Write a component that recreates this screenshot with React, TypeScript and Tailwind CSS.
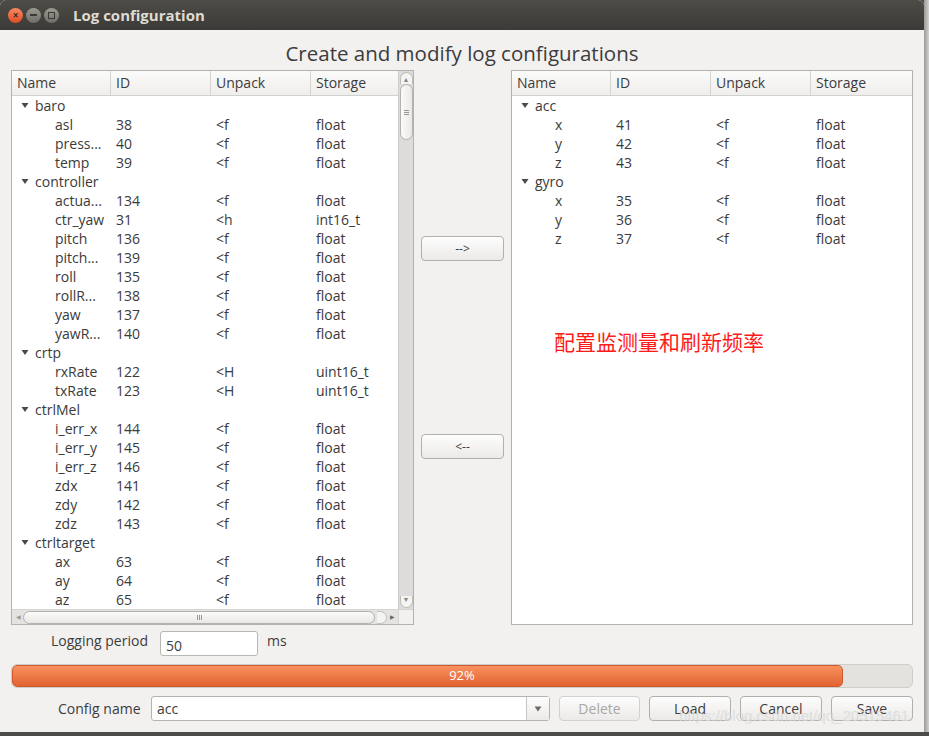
import React from 'react'

type Row = { name: string; id?: string; unpack?: string; storage?: string; parent?: boolean }

const leftRows: Row[] = [
  { name: 'baro', parent: true },
  { name: 'asl', id: '38', unpack: '<f', storage: 'float' },
  { name: 'press...', id: '40', unpack: '<f', storage: 'float' },
  { name: 'temp', id: '39', unpack: '<f', storage: 'float' },
  { name: 'controller', parent: true },
  { name: 'actua...', id: '134', unpack: '<f', storage: 'float' },
  { name: 'ctr_yaw', id: '31', unpack: '<h', storage: 'int16_t' },
  { name: 'pitch', id: '136', unpack: '<f', storage: 'float' },
  { name: 'pitch...', id: '139', unpack: '<f', storage: 'float' },
  { name: 'roll', id: '135', unpack: '<f', storage: 'float' },
  { name: 'rollR...', id: '138', unpack: '<f', storage: 'float' },
  { name: 'yaw', id: '137', unpack: '<f', storage: 'float' },
  { name: 'yawR...', id: '140', unpack: '<f', storage: 'float' },
  { name: 'crtp', parent: true },
  { name: 'rxRate', id: '122', unpack: '<H', storage: 'uint16_t' },
  { name: 'txRate', id: '123', unpack: '<H', storage: 'uint16_t' },
  { name: 'ctrlMel', parent: true },
  { name: 'i_err_x', id: '144', unpack: '<f', storage: 'float' },
  { name: 'i_err_y', id: '145', unpack: '<f', storage: 'float' },
  { name: 'i_err_z', id: '146', unpack: '<f', storage: 'float' },
  { name: 'zdx', id: '141', unpack: '<f', storage: 'float' },
  { name: 'zdy', id: '142', unpack: '<f', storage: 'float' },
  { name: 'zdz', id: '143', unpack: '<f', storage: 'float' },
  { name: 'ctrltarget', parent: true },
  { name: 'ax', id: '63', unpack: '<f', storage: 'float' },
  { name: 'ay', id: '64', unpack: '<f', storage: 'float' },
  { name: 'az', id: '65', unpack: '<f', storage: 'float' },
]

const rightRows: Row[] = [
  { name: 'acc', parent: true },
  { name: 'x', id: '41', unpack: '<f', storage: 'float' },
  { name: 'y', id: '42', unpack: '<f', storage: 'float' },
  { name: 'z', id: '43', unpack: '<f', storage: 'float' },
  { name: 'gyro', parent: true },
  { name: 'x', id: '35', unpack: '<f', storage: 'float' },
  { name: 'y', id: '36', unpack: '<f', storage: 'float' },
  { name: 'z', id: '37', unpack: '<f', storage: 'float' },
]

function Caret() {
  return (
    <svg width="8" height="7" viewBox="0 0 8 7" className="shrink-0">
      <path d="M0.5 1 L7.5 1 L4 6 Z" fill="#4a4a48" />
    </svg>
  )
}

function Header() {
  return (
    <div className="flex h-[25px] border-b border-[#d3d1cd] bg-gradient-to-b from-[#fbfbfa] to-[#efeeec] text-[#3c3c3c]">
      <div className="w-[99px] border-r border-[#d6d4d0] pl-[5px] leading-[24px]">Name</div>
      <div className="w-[100px] border-r border-[#d6d4d0] pl-[5px] leading-[24px]">ID</div>
      <div className="w-[100px] border-r border-[#d6d4d0] pl-[5px] leading-[24px]">Unpack</div>
      <div className="flex-1 pl-[5px] leading-[24px]">Storage</div>
    </div>
  )
}

function Rows({ rows }: { rows: Row[] }) {
  return (
    <div className="flex flex-col bg-white text-[#3a3a3a]">
      {rows.map((r, i) =>
        r.parent ? (
          <div key={i} className="flex h-[19px] items-center pl-[9px]">
            <Caret />
            <span className="ml-[6px] leading-[19px]">{r.name}</span>
          </div>
        ) : (
          <div key={i} className="flex h-[19px] items-center leading-[19px]">
            <div className="w-[99px] pl-[43px] whitespace-nowrap">{r.name}</div>
            <div className="w-[100px] pl-[5px]">{r.id}</div>
            <div className="w-[100px] pl-[5px]">{r.unpack}</div>
            <div className="pl-[5px] whitespace-nowrap">{r.storage}</div>
          </div>
        )
      )}
    </div>
  )
}

function VScroll() {
  return (
    <div className="flex w-[15px] flex-col items-center border-l border-[#cfcdc9] bg-[#dddcda] pt-[1px] pb-[1px]">
      <div className="flex h-[12px] w-[13px] items-end justify-center rounded-t-full border border-b-0 border-[#bdbbb7] bg-[#f4f4f3] text-[7px] leading-[8px] text-[#8a8885]">▲</div>
      <div className="flex h-[56px] w-[13px] items-center justify-center rounded-full border border-[#b3b1ad] bg-gradient-to-r from-[#fbfbfa] to-[#e9e8e6]">
        <div className="flex flex-col gap-[1px]">
          <div className="h-px w-[5px] bg-[#9a9894]" />
          <div className="h-px w-[5px] bg-[#9a9894]" />
          <div className="h-px w-[5px] bg-[#9a9894]" />
        </div>
      </div>
      <div className="flex-1" />
      <div className="flex h-[12px] w-[13px] items-start justify-center rounded-b-full border border-t-0 border-[#bdbbb7] bg-[#f4f4f3] text-[7px] leading-[8px] text-[#8a8885]">▼</div>
    </div>
  )
}

function HScroll() {
  return (
    <div className="flex h-[15px] border-t border-[#d6d4d0] bg-[#f1f0ef]">
      <div className="flex flex-1 items-center bg-[#e4e3e1] px-[1px]">
        <div className="w-[10px] text-center text-[6px] text-[#9a9894]">◀</div>
        <div className="flex h-[13px] flex-1 items-center justify-center rounded-full border border-[#b3b1ad] bg-gradient-to-b from-[#fbfbfa] to-[#e9e8e6]">
          <div className="flex gap-[1px]">
            <div className="h-[5px] w-px bg-[#9a9894]" />
            <div className="h-[5px] w-px bg-[#9a9894]" />
            <div className="h-[5px] w-px bg-[#9a9894]" />
          </div>
        </div>
        <div className="ml-[2px] h-[13px] w-[10px] rounded-r-full border border-l-0 border-[#c4c2be] bg-[#f4f4f3]" />
        <div className="w-[10px] text-center text-[6px] text-[#6d6b68]">▶</div>
      </div>
      <div className="w-[15px] border-l border-[#d6d4d0] bg-[#f2f1f0]" />
    </div>
  )
}

function Btn({ children, disabled, w }: { children: React.ReactNode; disabled?: boolean; w: string }) {
  return (
    <div
      className={`flex h-[25px] ${w} items-center justify-center rounded-[4px] border bg-gradient-to-b from-[#fdfdfd] to-[#eceae8] ${
        disabled ? 'border-[#d3d1cd] text-[#a9a7a3]' : 'border-[#b2b0ab] text-[#3c3c3c]'
      }`}
    >
      {children}
    </div>
  )
}

export default function App() {
  return (
    <div className="relative h-[736px] w-[929px] overflow-hidden bg-[#4b4b49] font-['Open_Sans','Noto_Sans',sans-serif] text-[14px]">
      <div className="flex h-[732px] w-[929px]">
        <div className="flex h-[732px] w-[924px] flex-col overflow-hidden rounded-t-[6px] bg-[#f2f1f0]">
          {/* title bar */}
          <div className="flex h-[30px] items-center bg-gradient-to-b from-[#4e4c47] to-[#3b3a36] pl-[8px]">
            <div className="flex h-[15px] w-[15px] items-center justify-center rounded-full bg-gradient-to-b from-[#f58a64] to-[#df4a1e] text-[10px] font-bold leading-none text-[#3b2a22]">×</div>
            <div className="ml-[3px] flex h-[15px] w-[15px] items-center justify-center rounded-full bg-gradient-to-b from-[#9d9a92] to-[#6f6d67]">
              <div className="h-[1.5px] w-[7px] bg-[#3b3a36]" />
            </div>
            <div className="ml-[3px] flex h-[15px] w-[15px] items-center justify-center rounded-full bg-gradient-to-b from-[#9d9a92] to-[#6f6d67]">
              <div className="h-[7px] w-[7px] border border-[#3b3a36]" />
            </div>
            <div className="ml-[14px] text-[15px] font-bold text-[#dfdbd2]">Log configuration</div>
          </div>

          {/* heading */}
          <div className="flex h-[40px] items-start justify-center pt-[9px] text-[20.5px] leading-[28px] text-[#3c3c3c]">
            Create and modify log configurations
          </div>

          <div className="flex flex-col px-[11px]">
            {/* trees */}
            <div className="flex h-[555px]">
              <div className="flex w-[403px] flex-col border border-[#b4b2ad] bg-white">
                <div className="flex flex-1">
                  <div className="flex flex-1 flex-col">
                    <Header />
                    <Rows rows={leftRows} />
                  </div>
                  <VScroll />
                </div>
                <HScroll />
              </div>

              <div className="ml-[7px] flex w-[83px] flex-col pt-[166px]">
                <Btn w="w-[83px]">
                  <span className="text-[12px]">--&gt;</span>
                </Btn>
                <div className="mt-[173px]">
                  <Btn w="w-[83px]">
                    <span className="text-[12px]">&lt;--</span>
                  </Btn>
                </div>
              </div>

              <div className="ml-[7px] flex flex-1 flex-col border border-[#b4b2ad] bg-white">
                <Header />
                <Rows rows={rightRows} />
                <div className="flex flex-1 items-start pl-[42px] pt-[79px]">
                  <span className="font-['Noto_Sans_CJK_SC',sans-serif] text-[21px] leading-[28px] text-[#ff1a1a]">
                    配置监测量和刷新频率
                  </span>
                </div>
              </div>
            </div>

            {/* logging period */}
            <div className="mt-[6px] flex h-[25px] items-start pl-[40px] text-[#3c3c3c]">
              <span className="w-[109px] leading-[20px]">Logging period</span>
              <div className="flex h-[25px] w-[98px] items-center rounded-[3px] border border-[#b9b7b2] bg-white pl-[5px] pt-[3px]">
                50
              </div>
              <span className="ml-[9px] leading-[20px]">ms</span>
            </div>

            {/* progress */}
            <div className="relative mt-[8px] h-[24px] w-full overflow-hidden rounded-[6px] border border-[#cfcdc9] bg-[#e4e2df]">
              <div className="h-full w-[831px] rounded-[5px] border border-[#cf5a2c] bg-gradient-to-b from-[#f7915f] to-[#e2622f]" />
              <div className="absolute inset-0 flex items-center justify-center text-[13px] text-white">92%</div>
            </div>

            {/* config row */}
            <div className="mt-[8px] flex h-[25px] items-center text-[#3c3c3c]">
              <span className="ml-[47px] w-[93px]">Config name</span>
              <div className="flex h-[25px] flex-1 rounded-[3px] border border-[#b5b3ae] bg-white">
                <div className="flex flex-1 items-center pl-[5px]">acc</div>
                <div className="flex w-[23px] items-center justify-center border-l border-[#c8c6c2] bg-gradient-to-b from-[#fdfdfd] to-[#eceae8]">
                  <svg width="8" height="6" viewBox="0 0 8 6">
                    <path d="M0.5 0.5 L7.5 0.5 L4 5.5 Z" fill="#6d6b68" />
                  </svg>
                </div>
              </div>
              <div className="ml-[9px]">
                <Btn w="w-[81px]" disabled>Delete</Btn>
              </div>
              <div className="ml-[9px]">
                <Btn w="w-[82px]">Load</Btn>
              </div>
              <div className="ml-[9px]">
                <Btn w="w-[82px]">Cancel</Btn>
              </div>
              <div className="ml-[9px]">
                <Btn w="w-[82px]">Save</Btn>
              </div>
            </div>
          </div>
        </div>
        <div className="flex-1 bg-gradient-to-r from-[#9a9a98] to-[#d2d2d0]" />
      </div>

      {/* watermark */}
      <div className="absolute left-[679px] top-[705px] font-['Liberation_Sans',sans-serif] text-[15px] text-[#d8d8d8]/80">
        https://blog.csdn.net/qq_20515461
      </div>
    </div>
  )
}
